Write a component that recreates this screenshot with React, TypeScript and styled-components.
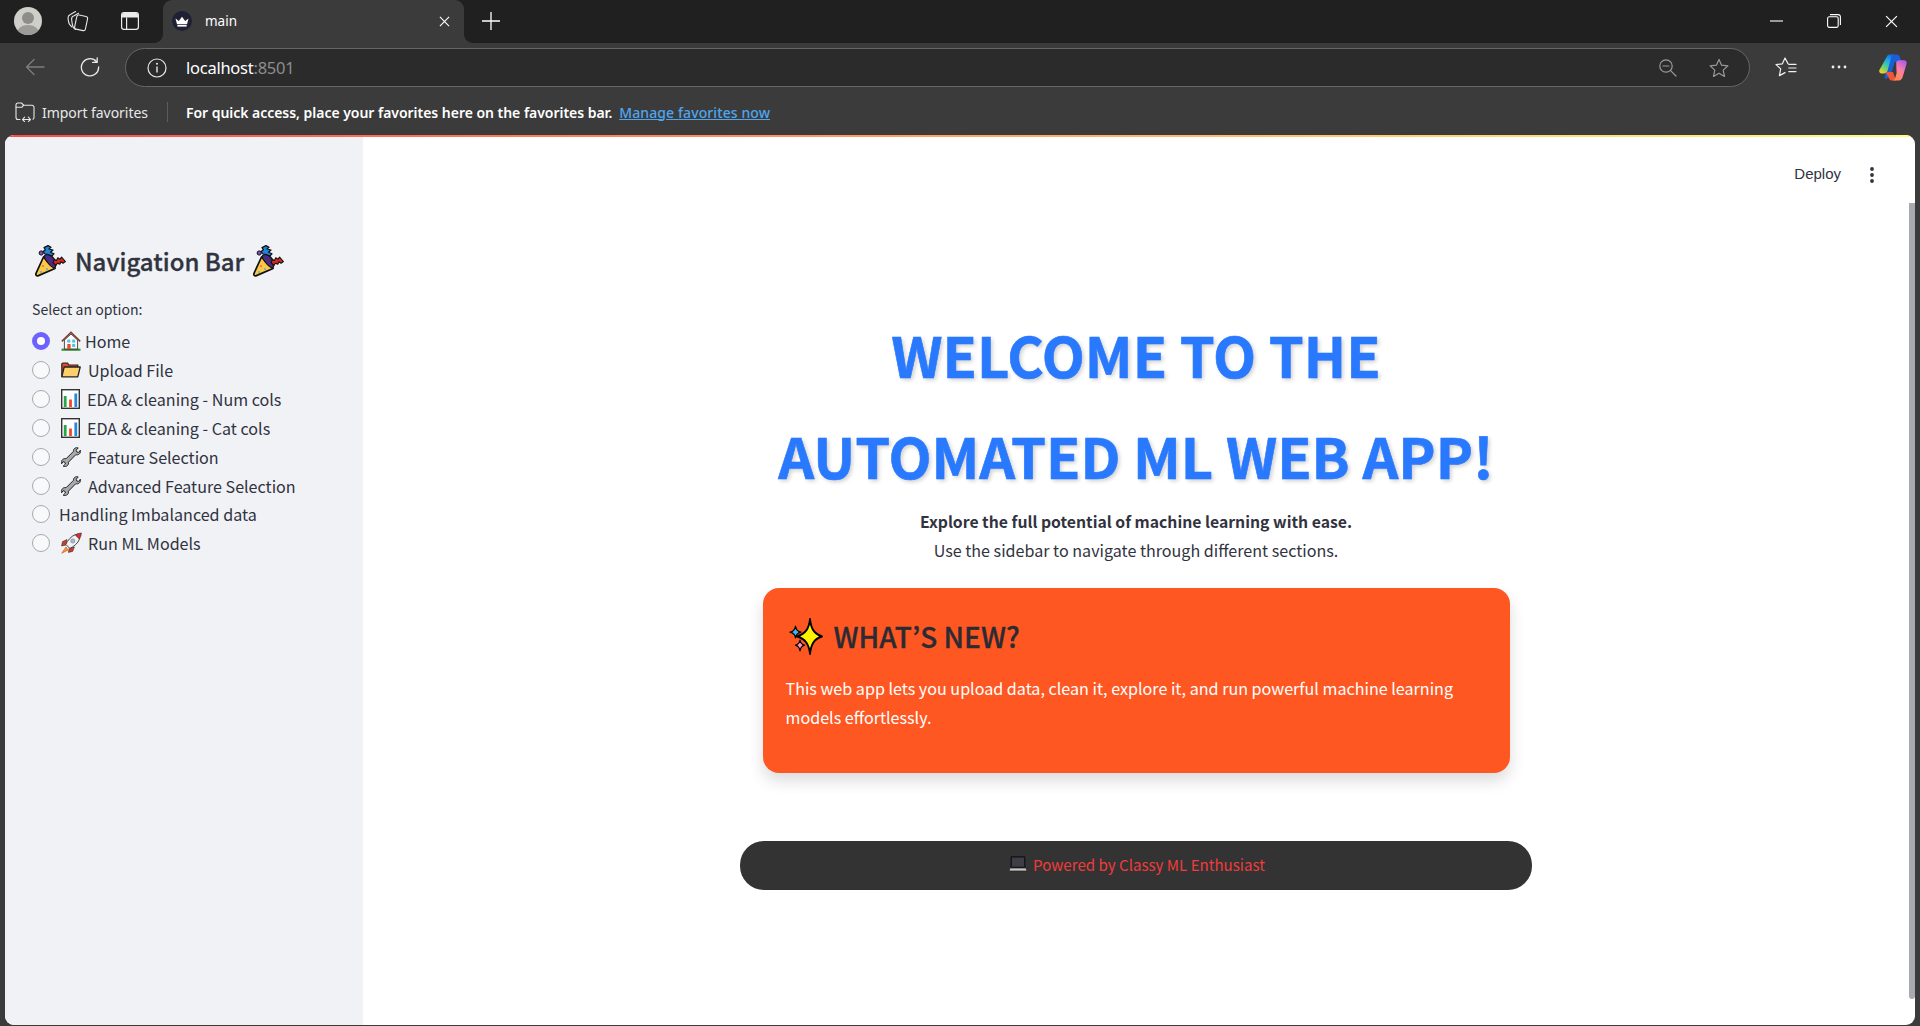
import React from "react";
import styled, { createGlobalStyle } from "styled-components";

const Global = createGlobalStyle`
  html, body { margin: 0; padding: 0; height: 100%; background: #3b3b3b; overflow: hidden; }
  * { box-sizing: border-box; }
  #root { height: 1026px; }
`;

const UI = `"Noto Sans", "Liberation Sans", sans-serif`;
const SRC = `"Noto Sans CJK JP", "Noto Sans", sans-serif`;

const Page = styled.div`
  display: flex;
  flex-direction: column;
  height: 1026px;
  background: #3b3b3b;
  font-family: ${UI};
`;

const TitleBar = styled.div`
  display: flex;
  align-items: stretch;
  height: 43px;
  background: #202020;
  flex: none;
`;

const Slot = styled.div<{ $w: number }>`
  flex: none;
  width: ${(p) => p.$w}px;
  display: flex;
  align-items: center;
  justify-content: center;
  padding-bottom: 1px;
`;

const CopilotSlot = styled.div`
  flex: none;
  width: 63px;
  display: flex;
  align-items: center;
  padding-left: 22px;
`;

const Spacer = styled.div`
  flex: 1;
`;

const Tab = styled.div`
  position: relative;
  flex: none;
  margin-left: 2px;
  width: 301px;
  background: #3b3b3b;
  border-radius: 9px 9px 0 0;
  display: flex;
  align-items: center;
  padding: 0 0 1px 8px;
  color: #fff;
  font-size: 13.5px;
  &::before,
  &::after {
    content: "";
    position: absolute;
    bottom: 0;
    width: 9px;
    height: 9px;
    background: radial-gradient(circle at var(--cx) 0, #202020 8.5px, #3b3b3b 9.5px);
  }
  &::before {
    left: -9px;
    --cx: 0;
  }
  &::after {
    right: -9px;
    --cx: 100%;
  }
`;

const Favicon = styled.span`
  flex: none;
  width: 20px;
  height: 20px;
  border-radius: 50%;
  background: #1e2033;
  display: flex;
  align-items: center;
  justify-content: center;
  margin-left: 1px;
`;

const TabTitle = styled.span`
  margin-left: 13px;
  flex: 1;
`;

const TabClose = styled.span`
  flex: none;
  width: 40px;
  display: flex;
  justify-content: center;
`;

const ToolBar = styled.div`
  display: flex;
  align-items: center;
  height: 49px;
  flex: none;
`;

const UrlPill = styled.div`
  flex: 1;
  height: 39px;
  margin-left: 15px;
  border: 1px solid #666;
  border-radius: 20px;
  background: #2b2b2b;
  display: flex;
  align-items: center;
  padding-left: 21px;
`;

const UrlText = styled.span`
  margin-left: 19px;
  font-size: 16.5px;
  letter-spacing: -0.25px;
  color: #fff;
  flex: 1;
`;

const UrlPort = styled.span`
  color: #8d8d8d;
`;

const PillIcon = styled.span<{ $w: number }>`
  flex: none;
  width: ${(p) => p.$w}px;
  display: flex;
  justify-content: center;
`;

const FavBar = styled.div`
  display: flex;
  align-items: center;
  height: 43px;
  flex: none;
  padding: 0 0 3px 15px;
  font-size: 14px;
  color: #fff;
`;

const ImportLabel = styled.span`
  margin-left: 7px;
  color: #e8e8e8;
  letter-spacing: -0.05px;
`;

const FavDivider = styled.span`
  width: 1px;
  height: 20px;
  background: #5c5c5c;
  margin: 0 18px 0 19px;
`;

const FavHint = styled.span`
  font-weight: 600;
  letter-spacing: -0.03px;
`;

const FavLink = styled.a`
  margin-left: 7px;
  color: #4fa6ee;
  text-decoration: underline;
  font-weight: 500;
  letter-spacing: 0.1px;
`;

const AppFrame = styled.div`
  flex: 1;
  display: flex;
  flex-direction: column;
  margin: 0 5px 1px 5px;
  border-radius: 9px;
  overflow: hidden;
  background: #fff;
  min-height: 0;
`;

const Decoration = styled.div`
  flex: none;
  height: 2px;
  background: linear-gradient(90deg, #ff4b4b, #fffd80);
`;

const AppBody = styled.div`
  flex: 1;
  display: flex;
  min-height: 0;
  font-family: ${SRC};
  color: #31333f;
`;

const Sidebar = styled.aside`
  flex: none;
  width: 358px;
  background: #f0f2f6;
  padding: 105px 0 0 27px;
`;

const SideTitle = styled.h2`
  margin: 0;
  display: flex;
  align-items: center;
  height: 38px;
  padding-left: 3px;
  font-size: 24px;
  font-weight: 500;
  line-height: 38px;
  color: #31333f;
  -webkit-text-stroke: 0.3px #31333f;
`;

const SideTitleText = styled.span`
  margin: 0 9px 0 9px;
`;

const OptionLabel = styled.div`
  margin-top: 19px;
  font-size: 14.1px;
  line-height: 20px;
  color: #31333f;
`;

const RadioList = styled.div`
  margin-top: 8px;
  display: flex;
  flex-direction: column;
`;

const RadioRow = styled.label`
  display: flex;
  align-items: center;
  height: 28.85px;
  font-size: 16.1px;
  color: #31333f;
`;

const RadioDot = styled.span<{ $on?: boolean }>`
  flex: none;
  width: 18px;
  height: 18px;
  border-radius: 50%;
  margin-right: 9px;
  background: ${(p) => (p.$on ? "#fff" : "#f8f9fb")};
  border: ${(p) => (p.$on ? "5.5px solid #6c63ff" : "1px solid #a9a9ad")};
`;

const EmojiSlot = styled.span<{ $w: number }>`
  flex: none;
  width: ${(p) => p.$w}px;
  display: flex;
  align-items: center;
  padding-left: 2px;
`;

const Main = styled.main`
  flex: 1;
  display: flex;
  flex-direction: column;
  align-items: center;
  min-width: 0;
`;

const TopBar = styled.div`
  align-self: stretch;
  flex: none;
  height: 166px;
  display: flex;
  justify-content: flex-end;
  align-items: flex-start;
  padding: 27px 35px 0 0;
  font-family: "Liberation Sans", sans-serif;
  font-size: 15px;
  line-height: 20px;
  color: #31333f;
`;

const DeployLabel = styled.span`
  margin-right: 29px;
`;

const KebabDots = styled.span`
  display: flex;
  height: 20px;
  align-items: center;
  margin-top: 1px;
`;

const Column = styled.div`
  width: 792px;
  display: flex;
  flex-direction: column;
  align-items: center;
`;

const Headline = styled.h1`
  margin: 0;
  text-align: center;
  font-size: 56px;
  line-height: 101px;
  font-weight: 700;
  color: #2979ff;
  -webkit-text-stroke: 0.6px #2979ff;
  text-shadow: 2px 2px 4px rgba(0, 0, 0, 0.2);
  white-space: nowrap;
`;

const LeadBlock = styled.div`
  margin-top: 2px;
  text-align: center;
`;

const Lead = styled.p<{ $strong?: boolean }>`
  margin: 0;
  font-size: ${(p) => (p.$strong ? 15.75 : 16.1)}px;
  font-weight: ${(p) => (p.$strong ? 700 : 400)};
  line-height: 29px;
  color: #31333f;
`;

const Card = styled.section`
  margin-top: 23px;
  width: 747px;
  height: 185px;
  border-radius: 16px;
  background: #ff5722;
  box-shadow: 0 8px 16px rgba(0, 0, 0, 0.14);
  padding: 27px 23px 0 23px;
`;

const CardHead = styled.h3`
  margin: 0;
  display: flex;
  align-items: center;
  height: 42px;
  font-size: 28px;
  font-weight: 500;
  line-height: 42px;
  color: #2b2b33;
  -webkit-text-stroke: 0.3px #2b2b33;
`;

const CardHeadText = styled.span`
  margin-left: 11px;
`;

const CardText = styled.p`
  margin: 17px 0 0;
  font-size: 16.13px;
  line-height: 29px;
  color: #fff;
`;

const Footer = styled.footer`
  margin-top: 68px;
  width: 792px;
  height: 49px;
  border-radius: 24px;
  background: #333333;
  display: flex;
  align-items: center;
  justify-content: center;
  padding: 0 0 3px 2px;
  font-size: 15.1px;
  color: #f03c3c;
`;

const FooterText = styled.span`
  margin-left: 6px;
`;

const ScrollRail = styled.div`
  flex: none;
  width: 6px;
  padding: 66px 0 26px;
  display: flex;
`;

const ScrollThumb = styled.div`
  flex: 1;
  background: #a8aab0;
  border-radius: 0 0 3px 3px;
`;

/* ---------- icons ---------- */

const Line = { fill: "none", stroke: "currentColor", strokeLinecap: "round", strokeLinejoin: "round" } as const;

const Avatar = () => (
  <svg width="28" height="28" viewBox="0 0 28 28">
    <defs>
      <clipPath id="av">
        <circle cx="14" cy="14" r="14" />
      </clipPath>
    </defs>
    <g clipPath="url(#av)">
      <rect width="28" height="28" fill="#cfcfca" />
      <circle cx="14" cy="11" r="6" fill="#8e8d8a" />
      <ellipse cx="14" cy="26" rx="11" ry="8" fill="#9c9b98" />
    </g>
  </svg>
);

const Workspaces = () => (
  <svg width="22" height="22" viewBox="0 0 22 22" color="#e6e6e6">
    <g {...Line} strokeWidth="1.1">
      <rect x="8.6" y="5.6" width="11" height="14.4" rx="2" transform="rotate(12 14 12.8)" />
      <path d="M8.5 19.5C6.8 18.6 5.6 16 5.2 13.6L4.6 9.5C4.4 7.6 5.4 6.2 7.2 5.8L11.5 3.2" />
      <path d="M5 17C2.8 15.6 1.6 13.2 1.4 10.8L1 8C1 6.4 2 5 3.4 4.4L8.6 1.6" />
    </g>
  </svg>
);

const PanelIcon = () => (
  <svg width="18" height="18" viewBox="0 0 18 18">
    <rect x="0.6" y="0.6" width="16.8" height="16.8" rx="2.4" fill="none" stroke="#ececec" strokeWidth="1.2" />
    <path d="M1 3a2 2 0 0 1 2-2h12a2 2 0 0 1 2 2v2.6H1z" fill="#ececec" />
    <path d="M5.6 5.6V17" stroke="#ececec" strokeWidth="1.2" />
  </svg>
);

const Crown = () => (
  <svg width="14" height="11" viewBox="0 0 14 11">
    <path d="M0.5 2.5L3.8 5L7 0.8L10.2 5L13.5 2.5L12 8.2H2Z" fill="#fff" />
    <rect x="2.4" y="9" width="9.2" height="1.6" fill="#fff" />
  </svg>
);

const CrossIcon = ({ s = 12, c = "#fff", w = 1.2 }: { s?: number; c?: string; w?: number }) => (
  <svg width={s} height={s} viewBox="0 0 12 12">
    <path d="M1 1L11 11M11 1L1 11" stroke={c} strokeWidth={w} fill="none" />
  </svg>
);

const PlusIcon = () => (
  <svg width="18" height="18" viewBox="0 0 18 18">
    <path d="M9 0V18M0 9H18" stroke="#fff" strokeWidth="1.3" fill="none" />
  </svg>
);

const MinIcon = () => (
  <svg width="13" height="2" viewBox="0 0 13 2">
    <path d="M0 1H13" stroke="#fff" strokeWidth="1.1" />
  </svg>
);

const RestoreIcon = () => (
  <svg width="14" height="14" viewBox="0 0 14 14">
    <rect x="0.6" y="2.8" width="10.6" height="10.6" rx="1.6" fill="none" stroke="#fff" strokeWidth="1.1" />
    <path d="M3 0.6H11.2A2.2 2.2 0 0 1 13.4 2.8V11" fill="none" stroke="#fff" strokeWidth="1.1" />
  </svg>
);

const BackIcon = () => (
  <svg width="20" height="18" viewBox="0 0 20 18" color="#7d7d7d">
    <path {...Line} strokeWidth="1.3" d="M19 9H1.5M9 1.5L1.5 9L9 16.5" />
  </svg>
);

const RefreshIcon = () => (
  <svg width="20" height="20" viewBox="0 0 20 20" color="#e8e8e8">
    <path {...Line} strokeWidth="1.3" d="M16.6 4.8A8.6 8.6 0 1 0 18.6 10M17.2 0.8V5.4H12.6" />
  </svg>
);

const InfoIcon = () => (
  <svg width="20" height="20" viewBox="0 0 20 20">
    <circle cx="10" cy="10" r="9" fill="none" stroke="#e8e8e8" strokeWidth="1.2" />
    <path d="M10 8.6V14.6" stroke="#e8e8e8" strokeWidth="1.4" />
    <circle cx="10" cy="5.8" r="1" fill="#e8e8e8" />
  </svg>
);

const ZoomOutIcon = () => (
  <svg width="18" height="18" viewBox="0 0 18 18" color="#9a9a9a">
    <circle cx="7" cy="7" r="6.2" {...Line} strokeWidth="1.2" />
    <path {...Line} strokeWidth="1.2" d="M11.6 11.6L17 17M4 7H10" />
  </svg>
);

const StarPath = "M10 1.4L12.6 7.2L18.9 7.9L14.2 12.1L15.5 18.4L10 15.2L4.5 18.4L5.8 12.1L1.1 7.9L7.4 7.2Z";

const StarIcon = () => (
  <svg width="20" height="20" viewBox="0 0 20 20" color="#9a9a9a">
    <path {...Line} strokeWidth="1.2" d={StarPath} />
  </svg>
);

const FavListIcon = () => (
  <svg width="22" height="20" viewBox="0 0 22 20" color="#eee">
    <path {...Line} strokeWidth="1.2" d="M13 6.6L10 1L7.4 6.8L1 7.6L5.7 11.9L4.4 18.6L10 15.6" />
    <path {...Line} strokeWidth="1.2" d="M13.8 7.4H21M13.8 11H21M13.8 14.6H21" />
  </svg>
);

const DotsIcon = () => (
  <svg width="16" height="4" viewBox="0 0 16 4">
    <circle cx="2" cy="2" r="1.4" fill="#eee" />
    <circle cx="8" cy="2" r="1.4" fill="#eee" />
    <circle cx="14" cy="2" r="1.4" fill="#eee" />
  </svg>
);

const Copilot = () => (
  <svg width="28" height="27" viewBox="0 0 28 27">
    <defs>
      <linearGradient id="cpA" x1="0.75" y1="0" x2="0.2" y2="1">
        <stop offset="0" stopColor="#1668e0" />
        <stop offset="0.3" stopColor="#1ea7f0" />
        <stop offset="0.62" stopColor="#4fd08a" />
        <stop offset="1" stopColor="#f0d320" />
      </linearGradient>
      <linearGradient id="cpB" x1="0.7" y1="0" x2="0.2" y2="1">
        <stop offset="0" stopColor="#b65ae8" />
        <stop offset="0.45" stopColor="#ff7fa8" />
        <stop offset="1" stopColor="#ff8a3c" />
      </linearGradient>
    </defs>
    <path d="M10 2.5C10.8 1 12 0.4 13.6 0.4H17.6C19.4 0.4 20.4 1.4 20.8 2.6L22.4 8H15.6L12.2 19.4L8.4 24C7.6 25 6 24.8 5.6 23.4Z" fill="#1a5fd6" />
    <path d="M8 2.4C8.5 1 9.8 0.4 11 0.4H15C13.6 0.8 12.8 1.8 12.4 3.2L8.4 17C8 18.4 6.6 19.4 5 19.4H2.6C0.8 19.4 -0.2 17.8 0.4 16.1Z" fill="url(#cpA)" />
    <path d="M6.5 18L10.4 25C11 26.1 12 26.6 13 26.6H17L14 18Z" fill="#f0553a" />
    <path d="M17.2 8.4C17.7 7 19 6.2 20.4 6.2H25C27 6.2 28.2 8 27.6 9.8L23.5 23.5C22.8 25.6 21.2 26.6 19.4 26.6H13.4C15 26.2 15.9 25 16.3 23.7L17.6 19Z" fill="url(#cpB)" />
  </svg>
);

const ImportIcon = () => (
  <svg width="20" height="20" viewBox="0 0 20 20" color="#e8e8e8">
    <path {...Line} strokeWidth="1.1" d="M5 17.5H3A2 2 0 0 1 1 15.5V3A2 2 0 0 1 3 1H6.5L8.6 3.2H17A2 2 0 0 1 19 5.2V15.5A2 2 0 0 1 18 17.2" />
    <path {...Line} strokeWidth="1.1" d="M1 5.2H7L8.6 3.2" />
    <path {...Line} strokeWidth="1.1" d="M7.5 17.5H15.5M9.6 15.2L7.5 17.5L9.6 19.6M13.4 15.2L15.5 17.5L13.4 19.6" />
  </svg>
);

const Kebab = () => (
  <svg width="4" height="16" viewBox="0 0 4 16">
    <circle cx="2" cy="2" r="1.9" fill="#31333f" />
    <circle cx="2" cy="8" r="1.9" fill="#31333f" />
    <circle cx="2" cy="14" r="1.9" fill="#31333f" />
  </svg>
);

/* ---------- emoji drawings ---------- */

const Party = () => (
  <svg width="31" height="32" viewBox="0 0 31 32">
    <path d="M8.5 12L20 23.5L3.4 30.6C1.6 31.3 0.4 30 1 28.4Z" fill="#fdc846" stroke="#111" strokeWidth="1.7" strokeLinejoin="round" />
    <circle cx="8" cy="21" r="1.1" fill="#ef6c3e" />
    <circle cx="12" cy="24" r="1" fill="#40b8e8" />
    <circle cx="6" cy="27" r="1" fill="#40b8e8" />
    <path d="M9 11.5C10.5 8.5 14.5 9 17.5 12C20.5 15 21.5 19.5 20 23C17 23 14.5 20 12.5 17.5C11 15.5 9.5 14 9 11.5Z" fill="#4a2b80" stroke="#111" strokeWidth="1.2" />
    <path d="M10 9L8 6.5L10.5 4.8L9 2.6L13 0.6L16 2.2L14 4L18 5L15.5 7.2L19 8.8L16.8 11L13.5 9.6Z" fill="#1d86d8" stroke="#111" strokeWidth="1.2" strokeLinejoin="round" />
    <circle cx="6.2" cy="8" r="2.1" fill="#7a4fc0" stroke="#111" strokeWidth="1" />
    <path d="M18 17.5L19.5 14.5L21.5 15.6L22.8 12.8L25 14.2L26.6 12.2L30.4 16.5L28 18.2L26 16.8L24.8 19.2L22.6 18.2L20.8 20.5Z" fill="#d9291c" stroke="#111" strokeWidth="1.1" strokeLinejoin="round" />
  </svg>
);

const House = () => (
  <svg width="20" height="20" viewBox="0 0 20 20">
    <rect x="0.5" y="17.6" width="19" height="2.2" fill="#3c8f3c" />
    <path d="M3.4 9V18H16.6V9L10 3Z" fill="#fafafa" stroke="#222" strokeWidth="0.8" />
    <path d="M0.8 10.4L10 1.2L19.2 10.4" fill="none" stroke="#7d3a2a" strokeWidth="1.5" />
    <rect x="6.3" y="13" width="3.3" height="5" fill="#e8492f" />
    <rect x="6.2" y="8.6" width="3" height="3" fill="#4fc3ee" />
    <rect x="11.2" y="8.6" width="3" height="3" fill="#4fc3ee" />
    <rect x="11.2" y="13" width="3" height="3" fill="#4fc3ee" />
  </svg>
);

const Folder = () => (
  <svg width="20" height="16" viewBox="0 0 20 16">
    <path d="M0.8 14.8V2.2C0.8 1.4 1.3 1 2 1H6.5L8 3H16.8V5" fill="#e0492c" stroke="#222" strokeWidth="1.2" />
    <path d="M0.8 14.8L3.2 5H19.2L16.8 14.8Z" fill="#fdcf6a" stroke="#222" strokeWidth="1.3" strokeLinejoin="round" />
  </svg>
);

const BarChart = () => (
  <svg width="19" height="20" viewBox="0 0 19 20">
    <rect x="0.7" y="0.7" width="17.6" height="18.6" fill="#fff" stroke="#333" strokeWidth="1.4" />
    <rect x="2.8" y="7" width="2.8" height="11" fill="#28a745" />
    <rect x="8.1" y="10.5" width="2.8" height="7.5" fill="#ef4a2d" />
    <rect x="13.4" y="4.5" width="2.8" height="13.5" fill="#2a86dd" />
  </svg>
);

const Wrench = () => (
  <svg width="20" height="20" viewBox="0 0 20 20">
    <path
      d="M14 1.2C15 0.6 16.2 0.5 17.2 0.9L15.2 3.2L15.8 5L17.8 5.4L19.3 3.2C19.8 4.8 19.2 6.2 18.2 7C17 8 15.8 8 14.8 7.7L7.4 15.2C7.7 16.4 7.4 17.6 6.4 18.6C5.2 19.6 3.6 19.8 2.2 19.2L4.4 17L3.9 15.2L2 14.7L0.6 16.8C0 15.2 0.4 13.6 1.6 12.6C2.6 11.6 3.8 11.4 5 11.8L12.6 4.2C12.2 3 12.8 2 14 1.2Z"
      fill="#a9a9a9"
      stroke="#222"
      strokeWidth="1"
      strokeLinejoin="round"
    />
  </svg>
);

const Rocket = () => (
  <svg width="21" height="22" viewBox="0 0 21 22">
    <path d="M6 7.6L1.5 9.6L0.6 14L5 13Z" fill="#d23b2a" stroke="#333" strokeWidth="0.6" />
    <path d="M13.4 15L11.6 19.4L7.4 20.4L8.2 16.2Z" fill="#d23b2a" stroke="#333" strokeWidth="0.6" />
    <path d="M5 15L0.8 21.2L7 18Z" fill="#f59c2c" stroke="#d9541c" strokeWidth="0.7" />
    <path d="M4.8 12.4C6.5 8.6 10 4.2 14.4 2.6L18.6 6.8C17.2 11.2 12.6 14.8 8.8 16.4Z" fill="#eef2f6" stroke="#333" strokeWidth="0.9" strokeLinejoin="round" />
    <path d="M14.2 2.8C16 1.8 18 1.2 20.4 1C20.2 3.2 19.6 5.2 18.4 7Z" fill="#e2262c" stroke="#333" strokeWidth="0.6" strokeLinejoin="round" />
    <circle cx="11.8" cy="9" r="2" fill="#a9bccb" stroke="#8a8a8a" strokeWidth="0.8" />
  </svg>
);

const Sparkles = () => (
  <svg width="37" height="37" viewBox="0 0 37 37">
    <path d="M24 1C25 11 28 15.5 36 18.5C28 21 25 26 24 36C23 26 19.5 21 11 18.5C19.5 15.5 23 11 24 1Z" fill="#fff200" stroke="#000" strokeWidth="1.9" strokeLinejoin="round" />
    <path d="M9.5 8C10 12 11.5 13.5 15 14.2C11.5 15 10 16.4 9.5 20C9 16.4 7.5 15 4 14.2C7.5 13.5 9 12 9.5 8Z" fill="#35b8ee" stroke="#000" strokeWidth="1.2" strokeLinejoin="round" />
    <path d="M14 22C14.5 25.4 15.6 26.4 18.5 27.2C15.6 28 14.5 29.4 14 33C13.5 29.4 12.4 28 9.5 27.2C12.4 26.4 13.5 25.4 14 22Z" fill="#f598c8" stroke="#000" strokeWidth="1.2" strokeLinejoin="round" />
  </svg>
);

const Laptop = () => (
  <svg width="18" height="16" viewBox="0 0 18 16">
    <rect x="2.2" y="0.8" width="13.6" height="10.6" rx="0.8" fill="#3e3e46" stroke="#111" strokeWidth="1.2" />
    <path d="M1 12H17L18 15H0Z" fill="#c4c4c4" stroke="#222" strokeWidth="0.7" />
  </svg>
);

type Option = { icon?: React.ReactNode; slot?: number; label: string; on?: boolean };

const OPTIONS: Option[] = [
  { icon: <House />, slot: 26, label: "Home", on: true },
  { icon: <Folder />, slot: 29, label: "Upload File" },
  { icon: <BarChart />, slot: 28, label: "EDA & cleaning - Num cols" },
  { icon: <BarChart />, slot: 28, label: "EDA & cleaning - Cat cols" },
  { icon: <Wrench />, slot: 29, label: "Feature Selection" },
  { icon: <Wrench />, slot: 29, label: "Advanced Feature Selection" },
  { label: "Handling Imbalanced data" },
  { icon: <Rocket />, slot: 29, label: "Run ML Models" },
];

export default function App() {
  return (
    <>
      <Global />
      <Page>
        <TitleBar>
          <Slot $w={56}><Avatar /></Slot>
          <Slot $w={43}><Workspaces /></Slot>
          <Slot $w={62}><PanelIcon /></Slot>
          <Tab>
            <Favicon><Crown /></Favicon>
            <TabTitle>main</TabTitle>
            <TabClose><CrossIcon s={11} /></TabClose>
          </Tab>
          <Slot $w={54}><PlusIcon /></Slot>
          <Spacer />
          <Slot $w={58}><MinIcon /></Slot>
          <Slot $w={57}><RestoreIcon /></Slot>
          <Slot $w={58}><CrossIcon s={13} w={1.1} /></Slot>
        </TitleBar>
        <ToolBar>
          <Slot $w={70}><BackIcon /></Slot>
          <Slot $w={40}><RefreshIcon /></Slot>
          <UrlPill>
            <InfoIcon />
            <UrlText>localhost<UrlPort>:8501</UrlPort></UrlText>
            <PillIcon $w={51}><ZoomOutIcon /></PillIcon>
            <PillIcon $w={51}><StarIcon /></PillIcon>
            <PillIcon $w={5} />
          </UrlPill>
          <Slot $w={71}><FavListIcon /></Slot>
          <Slot $w={36}><DotsIcon /></Slot>
          <CopilotSlot><Copilot /></CopilotSlot>
        </ToolBar>
        <FavBar>
          <ImportIcon />
          <ImportLabel>Import favorites</ImportLabel>
          <FavDivider />
          <FavHint>For quick access, place your favorites here on the favorites bar.</FavHint>
          <FavLink>Manage favorites now</FavLink>
        </FavBar>
        <AppFrame>
          <Decoration />
          <AppBody>
            <Sidebar>
              <SideTitle>
                <Party />
                <SideTitleText>Navigation Bar</SideTitleText>
                <Party />
              </SideTitle>
              <OptionLabel>Select an option:</OptionLabel>
              <RadioList>
                {OPTIONS.map((o) => (
                  <RadioRow key={o.label}>
                    <RadioDot $on={o.on} />
                    {o.icon && <EmojiSlot $w={o.slot ?? 0}>{o.icon}</EmojiSlot>}
                    {o.label}
                  </RadioRow>
                ))}
              </RadioList>
            </Sidebar>
            <Main>
              <TopBar>
                <DeployLabel>Deploy</DeployLabel>
                <KebabDots><Kebab /></KebabDots>
              </TopBar>
              <Column>
                <Headline>WELCOME TO THE</Headline>
                <Headline>AUTOMATED ML WEB APP!</Headline>
                <LeadBlock>
                  <Lead $strong>Explore the full potential of machine learning with ease.</Lead>
                  <Lead>Use the sidebar to navigate through different sections.</Lead>
                </LeadBlock>
                <Card>
                  <CardHead>
                    <Sparkles />
                    <CardHeadText>WHAT’S NEW?</CardHeadText>
                  </CardHead>
                  <CardText>
                    This web app lets you upload data, clean it, explore it, and run powerful machine learning models effortlessly.
                  </CardText>
                </Card>
                <Footer>
                  <Laptop />
                  <FooterText>Powered by Classy ML Enthusiast</FooterText>
                </Footer>
              </Column>
            </Main>
            <ScrollRail><ScrollThumb /></ScrollRail>
          </AppBody>
        </AppFrame>
      </Page>
    </>
  );
}
